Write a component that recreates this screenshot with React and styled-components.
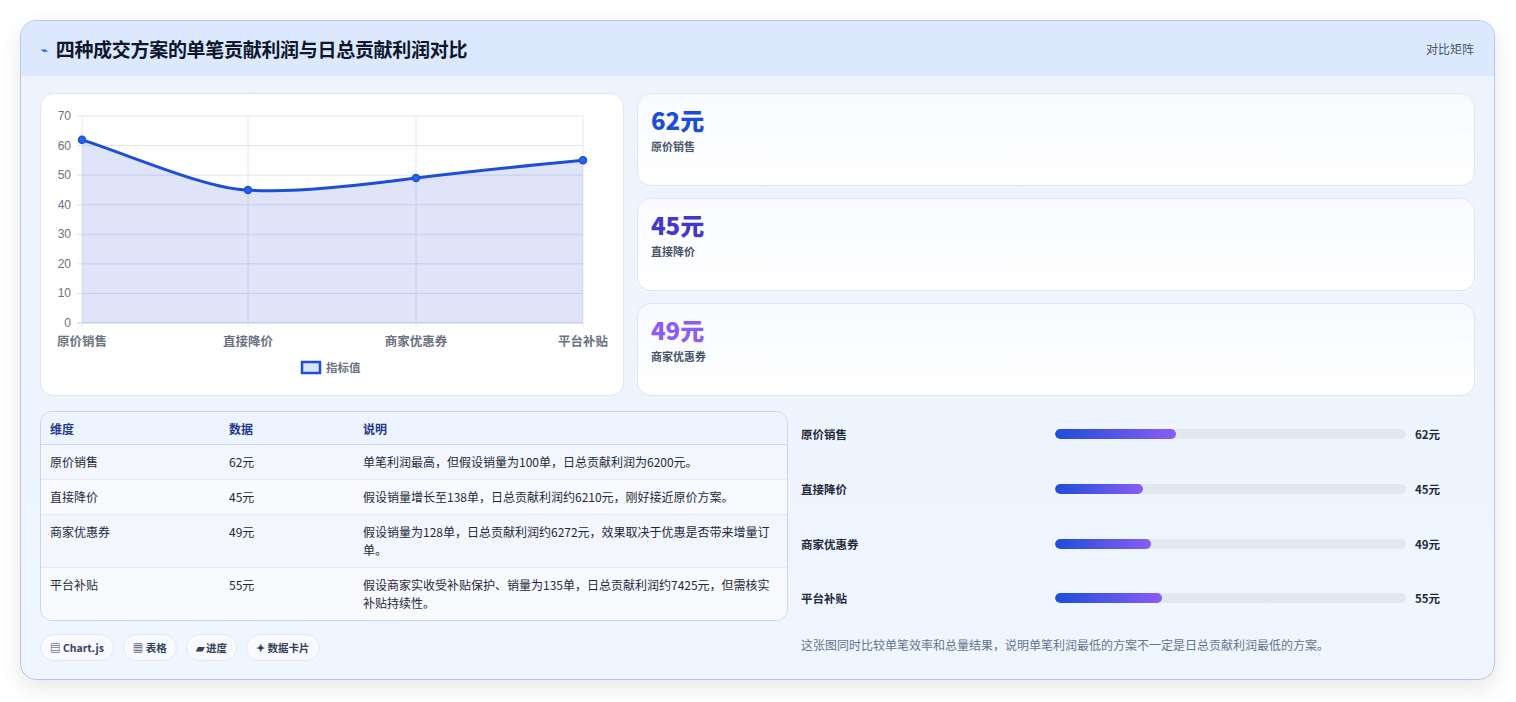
import React from "react";
import styled, { createGlobalStyle } from "styled-components";

const Global = createGlobalStyle`
  html,body{margin:0;padding:0;background:#fff;}
  body{font-family:"Noto Sans CJK SC","Noto Sans",sans-serif;color:#1e293b;}
`;
const Page = styled.div`padding:20px 20px 20px 20px;`;
const Panel = styled.div`
  width:1475px;box-sizing:border-box;border:1px solid #b7c3ea;border-radius:16px;overflow:hidden;
  background:linear-gradient(180deg,#eef3fe,#eff6ff);box-shadow:0 8px 22px rgba(15,23,42,.10);
`;
const Header = styled.div`
  height:55px;background:#dce8fe;display:flex;align-items:center;justify-content:space-between;padding:0 20px;
`;
const Title = styled.h1`margin:0;font-size:19px;font-weight:700;color:#0f172a;display:flex;align-items:center;gap:8px;letter-spacing:-0.3px;`;
const Icon = styled.span`font-size:11px;color:#2563eb;`;
const Tag = styled.span`font-size:12px;color:#4b5563;`;
const Body = styled.div`padding:17px 19px 18px 19px;display:flex;flex-direction:column;gap:15px;`;
const Top = styled.div`display:grid;grid-template-columns:584px 1fr;gap:13px;`;
const Card = styled.div`background:#fff;border:1px solid #dde5f5;border-radius:14px;`;
const ChartCard = styled(Card)`height:303px;box-sizing:border-box;`;
const Stats = styled.div`display:flex;flex-direction:column;gap:12px;`;
const Stat = styled(Card)`height:93px;box-sizing:border-box;padding:10px 13px;background:linear-gradient(180deg,#f8faff,#fff);`;
const StatVal = styled.div`font-size:24px;font-weight:800;color:${p=>p.c};line-height:32px;`;
const StatLab = styled.div`font-size:11px;font-weight:600;color:#475569;margin-top:2px;`;
const Bottom = styled.div`display:grid;grid-template-columns:748px 1fr;gap:13px;`;
const Left = styled.div`display:flex;flex-direction:column;gap:13px;`;
const Table = styled.table`
  width:100%;border-collapse:separate;border-spacing:0;border:1px solid #c9d4ec;border-radius:12px;overflow:hidden;font-size:12px;
  th{background:#eef4ff;color:#1e3a8a;font-weight:600;text-align:left;padding:0 9px;height:32px;border-bottom:1px solid #cfd9ee;}
  td{padding:8px 9px;vertical-align:top;line-height:18px;color:#1e293b;border-bottom:1px solid #e3e9f5;}
  tr:last-child td{border-bottom:none;}
  tbody tr:nth-child(odd) td{background:#f3f6fd;}
  tbody tr:nth-child(even) td{background:#f8fafe;}
`;
const Pills = styled.div`display:flex;gap:9px;`;
const Pill = styled.span`font-size:10.5px;font-weight:600;color:#334155;background:#f8faff;border:1px solid #e2e8f3;border-radius:14px;padding:5px 9px;`;
const Right = styled.div`display:flex;flex-direction:column;margin-top:-4px;`;
const Row = styled.div`display:grid;grid-template-columns:254px 351px 1fr;align-items:center;height:54.7px;`;
const RowLab = styled.span`font-size:11.5px;font-weight:600;color:#1e293b;`;
const Track = styled.div`height:10px;background:#e2e8f0;border-radius:5px;overflow:hidden;`;
const Fill = styled.div`height:100%;border-radius:5px;background:linear-gradient(90deg,#1d4ed8,#8b5cf6);`;
const RowVal = styled.span`font-size:11.5px;font-weight:700;color:#1e293b;padding-left:9px;`;
const Note = styled.p`margin:10px 0 0;font-size:12px;color:#64748b;`;

const data=[["原价销售",62,"单笔利润最高，但假设销量为100单，日总贡献利润为6200元。"],["直接降价",45,"假设销量增长至138单，日总贡献利润约6210元，刚好接近原价方案。"],["商家优惠券",49,"假设销量为128单，日总贡献利润约6272元，效果取决于优惠是否带来增量订单。"],["平台补贴",55,"假设商家实收受补贴保护、销量为135单，日总贡献利润约7425元，但需核实补贴持续性。"]];

function Chart(){
  const X=[41,207,375,542], y=v=>229-v*207/70;
  const P=data.map((d,i)=>[X[i],y(d[1])]);
  const line=`M${P[0][0]},${P[0][1]} C100,${P[0][1]+20} 170,${P[1][1]} ${P[1][0]},${P[1][1]} C250,${P[1][1]+4} 330,${P[2][1]+6} ${P[2][0]},${P[2][1]} C440,${P[2][1]-8} 500,${P[3][1]+4} ${P[3][0]},${P[3][1]}`;
  return <svg width="583" height="301" style={{display:"block"}}>
    {[0,10,20,30,40,50,60,70].map(v=><g key={v}><line x1="36" x2="542" y1={y(v)} y2={y(v)} stroke={v===0?"#c4cad6":"#dfe4ee"}/><text x="30" y={y(v)+4} fontSize="12" fill="#6b7280" textAnchor="end" fontFamily="Liberation Sans">{v}</text></g>)}
    {X.map(x=><line key={x} x1={x} x2={x} y1={y(70)} y2={233} stroke="#e4e8f1"/>)}
    <path d={line+` L542,229 L41,229 Z`} fill="rgba(37,76,216,0.15)"/>
    <path d={line} fill="none" stroke="#1d4ed8" strokeWidth="3"/>
    {P.map((p,i)=><circle key={i} cx={p[0]} cy={p[1]} r="3.5" fill="#2563eb" stroke="#1d4ed8" strokeWidth="1.5"/>)}
    {data.map((d,i)=><text key={i} x={X[i]} y="252" fontSize="12.5" fontWeight="600" fill="#6b7280" textAnchor="middle">{d[0]}</text>)}
    <rect x="261" y="268" width="18" height="11" fill="#dbe3f8" stroke="#1d4ed8" strokeWidth="2.5"/>
    <text x="285" y="278" fontSize="11.5" fontWeight="600" fill="#6b7280">指标值</text>
  </svg>;
}

export default function App(){
  return <Page><Global/><Panel>
    <Header><Title><Icon>⌁</Icon>四种成交方案的单笔贡献利润与日总贡献利润对比</Title><Tag>对比矩阵</Tag></Header>
    <Body>
      <Top>
        <ChartCard><Chart/></ChartCard>
        <Stats>
          <Stat><StatVal c="#1d4ed8">62元</StatVal><StatLab>原价销售</StatLab></Stat>
          <Stat><StatVal c="#4338ca">45元</StatVal><StatLab>直接降价</StatLab></Stat>
          <Stat><StatVal c="#8b5cf6">49元</StatVal><StatLab>商家优惠券</StatLab></Stat>
        </Stats>
      </Top>
      <Bottom>
        <Left>
          <Table>
            <colgroup><col style={{width:179}}/><col style={{width:134}}/><col/></colgroup>
            <thead><tr><th>维度</th><th>数据</th><th>说明</th></tr></thead>
            <tbody>{data.map(d=><tr key={d[0]}><td>{d[0]}</td><td>{d[1]}元</td><td>{d[2]}</td></tr>)}</tbody>
          </Table>
          <Pills><Pill>▤ Chart.js</Pill><Pill>▦ 表格</Pill><Pill>▰ 进度</Pill><Pill>✦ 数据卡片</Pill></Pills>
        </Left>
        <Right>
          {data.map(d=><Row key={d[0]}><RowLab>{d[0]}</RowLab><Track><Fill style={{width:`${d[1]/180*100}%`}}/></Track><RowVal>{d[1]}元</RowVal></Row>)}
          <Note>这张图同时比较单笔效率和总量结果，说明单笔利润最低的方案不一定是日总贡献利润最低的方案。</Note>
        </Right>
      </Bottom>
    </Body>
  </Panel></Page>;
}
